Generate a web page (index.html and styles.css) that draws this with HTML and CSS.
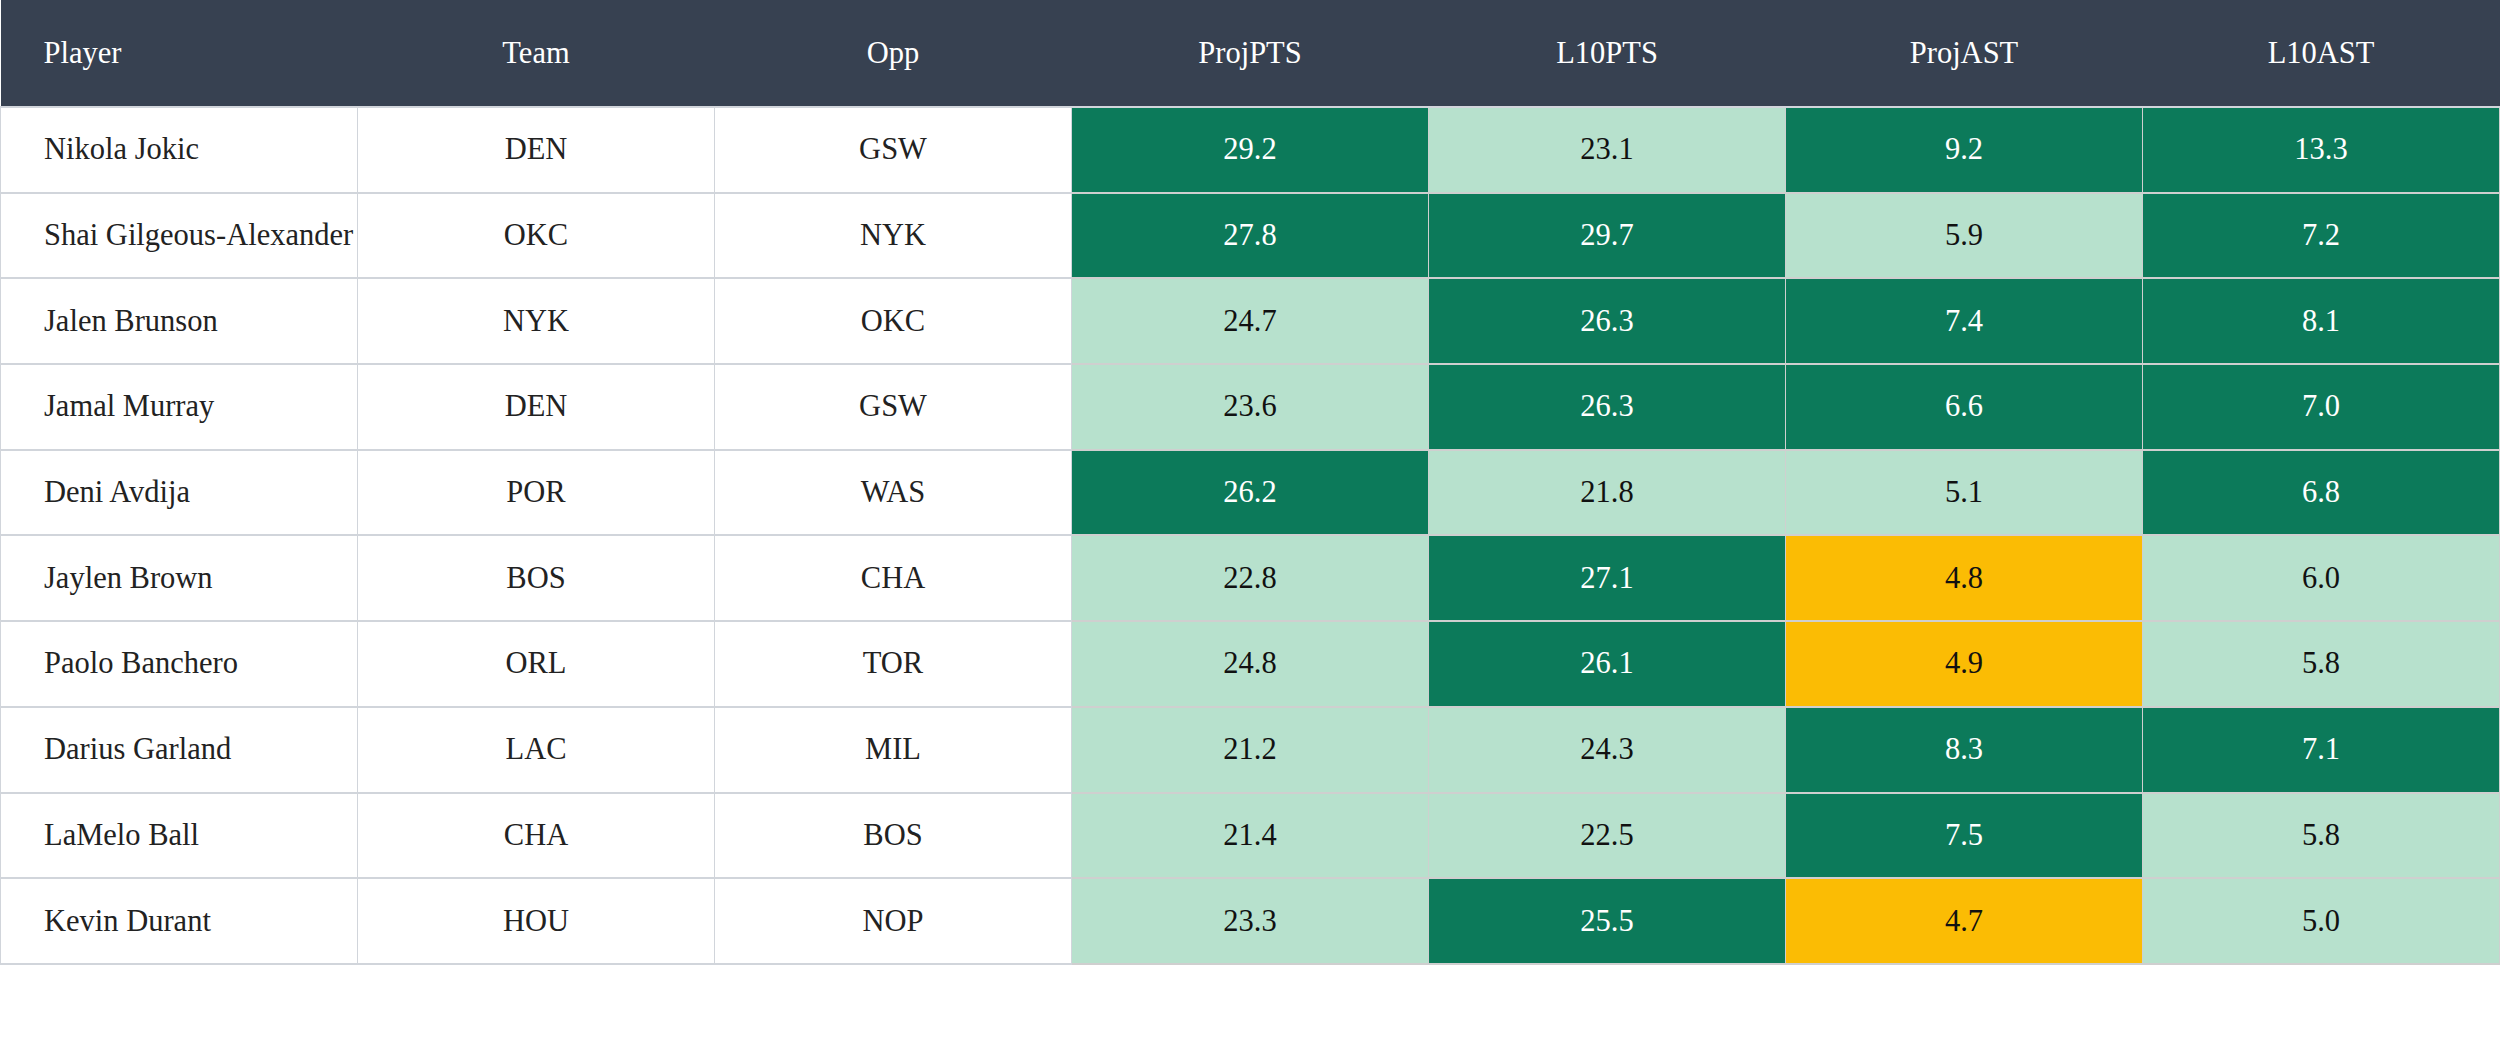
FILE: index.html
```html
<!DOCTYPE html>
<html lang="en">
<head>
<meta charset="utf-8">
<title>Player Projections</title>
<link rel="stylesheet" href="styles.css">
</head>
<body>
<table class="stats">
  <thead>
    <tr>
      <th class="name">Player</th>
      <th>Team</th>
      <th>Opp</th>
      <th>ProjPTS</th>
      <th>L10PTS</th>
      <th>ProjAST</th>
      <th>L10AST</th>
    </tr>
  </thead>
  <tbody>
    <tr><td class="name">Nikola Jokic</td><td>DEN</td><td>GSW</td><td class="hi">29.2</td><td class="mid">23.1</td><td class="hi">9.2</td><td class="hi">13.3</td></tr>
    <tr><td class="name">Shai Gilgeous-Alexander</td><td>OKC</td><td>NYK</td><td class="hi">27.8</td><td class="hi">29.7</td><td class="mid">5.9</td><td class="hi">7.2</td></tr>
    <tr><td class="name">Jalen Brunson</td><td>NYK</td><td>OKC</td><td class="mid">24.7</td><td class="hi">26.3</td><td class="hi">7.4</td><td class="hi">8.1</td></tr>
    <tr><td class="name">Jamal Murray</td><td>DEN</td><td>GSW</td><td class="mid">23.6</td><td class="hi">26.3</td><td class="hi">6.6</td><td class="hi">7.0</td></tr>
    <tr><td class="name">Deni Avdija</td><td>POR</td><td>WAS</td><td class="hi">26.2</td><td class="mid">21.8</td><td class="mid">5.1</td><td class="hi">6.8</td></tr>
    <tr><td class="name">Jaylen Brown</td><td>BOS</td><td>CHA</td><td class="mid">22.8</td><td class="hi">27.1</td><td class="lo">4.8</td><td class="mid">6.0</td></tr>
    <tr><td class="name">Paolo Banchero</td><td>ORL</td><td>TOR</td><td class="mid">24.8</td><td class="hi">26.1</td><td class="lo">4.9</td><td class="mid">5.8</td></tr>
    <tr><td class="name">Darius Garland</td><td>LAC</td><td>MIL</td><td class="mid">21.2</td><td class="mid">24.3</td><td class="hi">8.3</td><td class="hi">7.1</td></tr>
    <tr><td class="name">LaMelo Ball</td><td>CHA</td><td>BOS</td><td class="mid">21.4</td><td class="mid">22.5</td><td class="hi">7.5</td><td class="mid">5.8</td></tr>
    <tr><td class="name">Kevin Durant</td><td>HOU</td><td>NOP</td><td class="mid">23.3</td><td class="hi">25.5</td><td class="lo">4.7</td><td class="mid">5.0</td></tr>
  </tbody>
</table>
</body>
</html>
```
FILE: styles.css
```css
html, body {
  margin: 0;
  padding: 0;
  background: #ffffff;
}

body {
  font-family: "Liberation Serif", "Times New Roman", serif;
  color: #222222;
}

.stats {
  width: 2500px;
  border-collapse: collapse;
  table-layout: fixed;
  font-size: 30.5px;
}

.stats th {
  height: 106px;
  padding: 0;
  background: #374151;
  color: #ffffff;
  font-weight: normal;
  text-align: center;
  vertical-align: middle;
  border-bottom: 2px solid #d1d5db;
}

.stats td {
  height: 85.7px;
  padding: 0;
  text-align: center;
  vertical-align: middle;
  border: 1px solid #d1d5db;
  white-space: nowrap;
  box-sizing: border-box;
}

.stats tbody tr td {
  border-bottom-width: 2px;
}

.stats .name {
  text-align: left;
  padding-left: 43px;
}

.stats td.hi {
  background: #0c7a5a;
  color: #ffffff;
  border-color: #cfcfcf;
}

.stats td.mid {
  background: #b7e1cd;
  color: #111111;
  border-color: #cfcfcf;
}

.stats td.lo {
  background: #fbbc04;
  color: #111111;
  border-color: #cfcfcf;
}
```
